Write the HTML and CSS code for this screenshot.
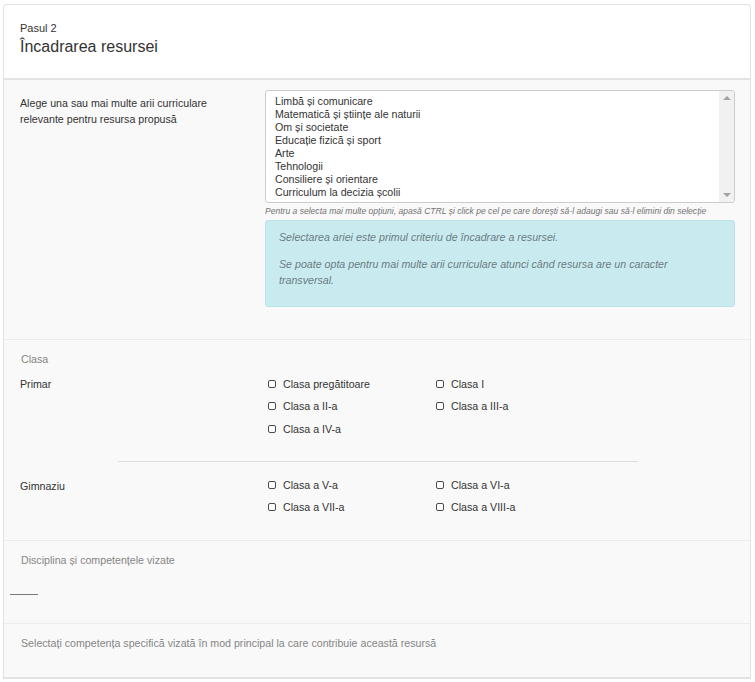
FILE: index.html
```html
<!DOCTYPE html>
<html lang="ro">
<head>
<meta charset="utf-8">
<title>Pasul 2</title>
<link rel="stylesheet" href="styles.css">
</head>
<body>
<div class="page">
  <div class="panel">
    <div class="panel-head">
      <div class="step">Pasul 2</div>
      <div class="title">Încadrarea resursei</div>
    </div>
    <div class="panel-body">
      <div class="row-arii">
        <div class="label-col">Alege una sau mai multe arii curriculare relevante pentru resursa propusă</div>
        <div class="field-col">
          <div class="listbox">
            <div class="options">
              <div class="opt">Limbă și comunicare</div>
              <div class="opt">Matematică și științe ale naturii</div>
              <div class="opt">Om și societate</div>
              <div class="opt">Educație fizică și sport</div>
              <div class="opt">Arte</div>
              <div class="opt">Tehnologii</div>
              <div class="opt">Consiliere și orientare</div>
              <div class="opt">Curriculum la decizia școlii</div>
            </div>
            <div class="scrollbar">
              <span class="arrow-up"></span>
              <span class="arrow-down"></span>
            </div>
          </div>
          <div class="help">Pentru a selecta mai multe opțiuni, apasă CTRL și click pe cel pe care dorești să-l adaugi sau să-l elimini din selecție</div>
          <div class="alert">
            <p>Selectarea ariei este primul criteriu de încadrare a resursei.</p>
            <p>Se poate opta pentru mai multe arii curriculare atunci când resursa are un caracter transversal.</p>
          </div>
        </div>
      </div>

      <div class="section">
        <div class="section-title">Clasa</div>
        <div class="level">
          <div class="level-name">Primar</div>
          <div class="checks">
            <label class="check"><span class="box"></span>Clasa pregătitoare</label>
            <label class="check"><span class="box"></span>Clasa I</label>
            <label class="check"><span class="box"></span>Clasa a II-a</label>
            <label class="check"><span class="box"></span>Clasa a III-a</label>
            <label class="check"><span class="box"></span>Clasa a IV-a</label>
          </div>
        </div>
        <div class="divider"></div>
        <div class="level level-last">
          <div class="level-name">Gimnaziu</div>
          <div class="checks">
            <label class="check"><span class="box"></span>Clasa a V-a</label>
            <label class="check"><span class="box"></span>Clasa a VI-a</label>
            <label class="check"><span class="box"></span>Clasa a VII-a</label>
            <label class="check"><span class="box"></span>Clasa a VIII-a</label>
          </div>
        </div>
      </div>

      <div class="section section-disc">
        <div class="section-title">Disciplina și competențele vizate</div>
        <div class="short-line"></div>
      </div>

      <div class="section section-comp">
        <div class="section-title">Selectați competența specifică vizată în mod principal la care contribuie această resursă</div>
      </div>
    </div>
  </div>
</div>
</body>
</html>
```

FILE: styles.css
```css
html, body {
  margin: 0;
  padding: 0;
  background: #ffffff;
}

body {
  font-family: "Liberation Sans", Arial, sans-serif;
  font-size: 10.65px;
  color: #333333;
}

.page {
  padding: 4px 4px 0 3px;
}

.panel {
  border: 1px solid #e2e2e2;
  border-bottom: none;
  border-radius: 4px 4px 0 0;
  background: #f9f9f9;
}

.panel-head {
  background: #ffffff;
  padding: 17px 16px 21px;
  border-bottom: 2px solid #e3e3e3;
  border-radius: 4px 4px 0 0;
}

.step {
  font-size: 11px;
  line-height: 13px;
  color: #333;
}

.title {
  font-size: 16px;
  line-height: 20px;
  margin-top: 2px;
  color: #333;
}

.panel-body {
  background: #f9f9f9;
}

.row-arii {
  display: flex;
  padding: 10px 15px 32px 16px;
  border-bottom: 1px solid #ececec;
}

.label-col {
  width: 245px;
  flex: none;
  padding-top: 5px;
  line-height: 16px;
  padding-right: 20px;
  box-sizing: border-box;
}

.field-col {
  flex: 1;
}

.listbox {
  display: flex;
  height: 113px;
  box-sizing: border-box;
  border: 1px solid #cccccc;
  border-radius: 3px;
  background: #ffffff;
  overflow: hidden;
}

.options {
  flex: 1;
  padding: 4px 0 0 9px;
}

.opt {
  line-height: 13px;
  font-size: 10.65px;
  color: #333;
  white-space: nowrap;
}

.scrollbar {
  width: 15px;
  flex: none;
  background: #f1f1f1;
  display: flex;
  flex-direction: column;
  justify-content: space-between;
  align-items: center;
  padding: 5px 0;
  box-sizing: border-box;
}

.arrow-up {
  width: 0;
  height: 0;
  border-left: 4px solid transparent;
  border-right: 4px solid transparent;
  border-bottom: 4px solid #a3a3a3;
}

.arrow-down {
  width: 0;
  height: 0;
  border-left: 4px solid transparent;
  border-right: 4px solid transparent;
  border-top: 4px solid #a3a3a3;
}

.help {
  font-style: italic;
  font-size: 8.55px;
  line-height: 12px;
  color: #737373;
  margin-top: 2px;
  white-space: nowrap;
}

.alert {
  margin-top: 3px;
  background: #c9ebf0;
  border: 1px solid #b9e3ea;
  border-radius: 3px;
  padding: 8px 13px 7px;
  font-style: italic;
  color: #6b7b82;
  line-height: 16px;
  font-size: 10.65px;
}

.alert p {
  margin: 0 0 11px;
}

.section {
  padding: 11px 15px 0 16px;
  border-bottom: 1px solid #ececec;
}

.section-title {
  line-height: 16px;
  color: #858585;
  padding-left: 1px;
}

.level {
  display: flex;
  margin-top: 9px;
}

.level-last {
  margin-top: 16px;
  padding-bottom: 25px;
}

.level-last .checks {
  margin-top: -1px;
}

.level-name {
  width: 248px;
  flex: none;
  line-height: 16px;
}

.checks {
  display: grid;
  grid-template-columns: 168px 168px;
  row-gap: 6.25px;
}

.check {
  display: flex;
  align-items: center;
  line-height: 16px;
  white-space: nowrap;
}

.box {
  width: 8px;
  height: 8px;
  box-sizing: border-box;
  border: 1px solid #4a4a4a;
  border-radius: 2px;
  background: #ffffff;
  margin-right: 7px;
  flex: none;
}

.divider {
  width: 520px;
  margin: 24px auto 0;
  border-top: 1px solid #dddddd;
}

.section-disc {
  padding-bottom: 28px;
}

.short-line {
  width: 28px;
  margin: 26px 0 0 -10px;
  border-top: 1px solid #777777;
}

.section-comp {
  padding-bottom: 26px;
  border-bottom: 2px solid #e3e3e3;
}
```
